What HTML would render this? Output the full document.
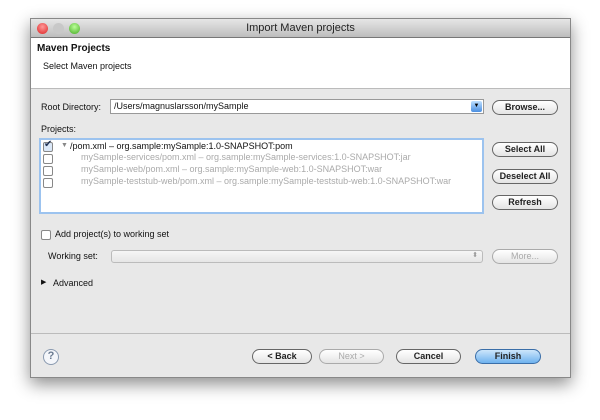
<!DOCTYPE html>
<html><head><style>
*{box-sizing:border-box;margin:0;padding:0}
body{width:600px;height:420px;background:#fff;font-family:"Liberation Sans",sans-serif;font-size:9px;color:#111;position:relative;overflow:hidden}
.win{position:absolute;left:30px;top:18px;width:541px;height:360px;background:#e8e8e8;border:1px solid #888;box-shadow:0 6px 16px rgba(0,0,0,.45)}
.title{position:absolute;left:0;top:0;width:100%;height:19px;background:linear-gradient(#e6e6e6,#bdbdbd);border-bottom:1px solid #777;text-align:center;font-size:11px;line-height:19px;color:#222}
.dot{position:absolute;top:4px;width:11px;height:11px;border-radius:50%}
.hdr{position:absolute;left:0;top:19px;width:100%;height:51px;background:#fff;border-bottom:1px solid #bbb}
.a{position:absolute;white-space:nowrap}
.btn{position:absolute;height:15px;border:1px solid #666;border-radius:8px;background:linear-gradient(#fff,#e4e4e4);text-align:center;font-size:9px;line-height:13px;font-weight:bold;color:#222}
.dis{color:#aaa;border-color:#aaa;font-weight:normal}
.cb{position:absolute;width:10px;height:10px;border:1px solid #888;border-radius:2px;background:#fff}
.g{color:#aaa}
</style></head><body>
<div class="win">
<div class="title">Import Maven projects
<div class="dot" style="left:6px;background:radial-gradient(circle at 50% 35%,#f99,#d22)"></div>
<div class="dot" style="left:22px;background:#c8c8c8"></div>
<div class="dot" style="left:38px;background:radial-gradient(circle at 50% 35%,#bf9,#4a2)"></div>
</div>
<div class="hdr">
<div class="a" style="left:6px;top:5px;font-size:10px;font-weight:bold">Maven Projects</div>
<div class="a" style="left:12px;top:23px">Select Maven projects</div>
</div>
<div class="a" style="left:10px;top:83px">Root Directory:</div>
<div class="a" style="left:79px;top:80px;width:374px;height:15px;border:1px solid #999;background:#fff;padding-left:3px;line-height:13px">/Users/magnuslarsson/mySample
<div style="position:absolute;right:1px;top:1px;width:11px;height:11px;background:linear-gradient(#bfe0ff,#4a8ee0);border-radius:2px;font-size:6px;line-height:11px;text-align:center;color:#000">▼</div></div>
<div class="btn" style="left:461px;top:81px;width:66px">Browse...</div>
<div class="a" style="left:10px;top:105px">Projects:</div>
<div class="a" style="left:8px;top:119px;width:445px;height:76px;border:2px solid #9cc3ef;background:#fff">
<div class="cb" style="left:2px;top:2px;background:#dbe8f8"><span style="position:absolute;left:0;top:-4px;font-size:10px;color:#235">✔</span></div>
<div class="a" style="left:20px;top:2px;font-size:7px;color:#888">▼</div>
<div class="a" style="left:29px;top:1px">/pom.xml – org.sample:mySample:1.0-SNAPSHOT:pom</div>
<div class="cb" style="left:2px;top:14px"></div><div class="a g" style="left:40px;top:12px">mySample-services/pom.xml – org.sample:mySample-services:1.0-SNAPSHOT:jar</div>
<div class="cb" style="left:2px;top:26px"></div><div class="a g" style="left:40px;top:24px">mySample-web/pom.xml – org.sample:mySample-web:1.0-SNAPSHOT:war</div>
<div class="cb" style="left:2px;top:38px"></div><div class="a g" style="left:40px;top:36px">mySample-teststub-web/pom.xml – org.sample:mySample-teststub-web:1.0-SNAPSHOT:war</div>
</div>
<div class="btn" style="left:461px;top:123px;width:66px">Select All</div>
<div class="btn" style="left:461px;top:150px;width:66px">Deselect All</div>
<div class="btn" style="left:461px;top:176px;width:66px">Refresh</div>
<div class="cb" style="left:10px;top:211px"></div>
<div class="a" style="left:24px;top:210px">Add project(s) to working set</div>
<div class="a" style="left:17px;top:232px">Working set:</div>
<div class="a" style="left:80px;top:231px;width:372px;height:13px;border:1px solid #bbb;border-radius:3px;background:linear-gradient(#f6f6f6,#e6e6e6)"><span style="position:absolute;right:4px;top:0;font-size:7px;color:#999">⬍</span></div>
<div class="btn dis" style="left:461px;top:230px;width:66px">More...</div>
<div class="a" style="left:10px;top:259px;font-size:7px">▶</div>
<div class="a" style="left:22px;top:259px">Advanced</div>
<div style="position:absolute;left:0;top:314px;width:100%;border-top:1px solid #bbb"></div>
<div class="a" style="left:12px;top:330px;width:16px;height:16px;border:1.5px solid #8a9ab0;border-radius:50%;text-align:center;font-weight:bold;font-size:11px;line-height:13px;color:#6a7a90;background:#f4f6fa">?</div>
<div class="btn" style="left:221px;top:330px;width:60px">&lt; Back</div>
<div class="btn dis" style="left:288px;top:330px;width:65px">Next &gt;</div>
<div class="btn" style="left:365px;top:330px;width:65px">Cancel</div>
<div class="btn" style="left:444px;top:330px;width:66px;background:linear-gradient(#cde6fb,#6eb2ef);border-color:#3a6ea8">Finish</div>
</div>
</body></html>
